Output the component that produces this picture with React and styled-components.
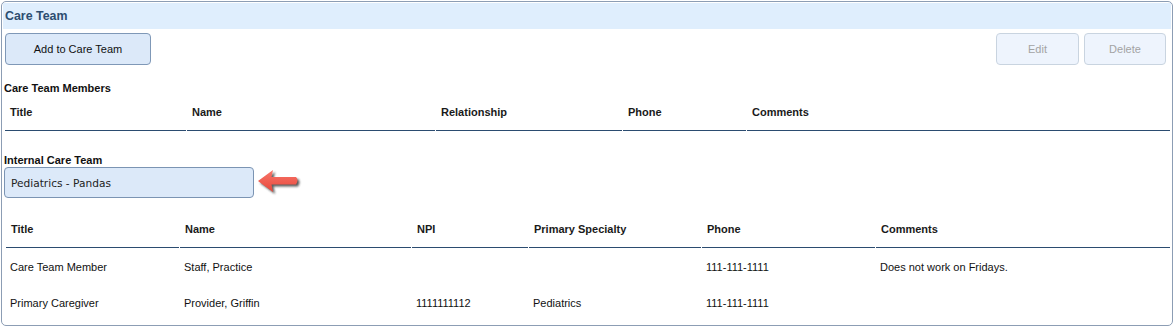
import React from "react";
import styled, { createGlobalStyle } from "styled-components";

const GlobalStyle = createGlobalStyle`
  body {
    margin: 0;
    background: #ffffff;
    font-family: "Liberation Sans", Arial, sans-serif;
    color: #111111;
  }
`;

const members = {
  columns: "181px 248px 186px 123px 1fr",
  heads: ["Title", "Name", "Relationship", "Phone", "Comments"],
  rows: [],
};

const internal = {
  columns: "173px 231px 116px 172px 173px 1fr",
  heads: ["Title", "Name", "NPI", "Primary Specialty", "Phone", "Comments"],
  rows: [
    ["Care Team Member", "Staff, Practice", "", "", "111-111-1111", "Does not work on Fridays."],
    ["Primary Caregiver", "Provider, Griffin", "1111111112", "Pediatrics", "111-111-1111", ""],
  ],
};

const Arrow = () => (
  <ArrowSvg width="50" height="30" viewBox="0 0 50 30">
    <defs>
      <filter id="arrowShadow" x="-20%" y="-30%" width="150%" height="180%">
        <feGaussianBlur stdDeviation="1.2" />
      </filter>
      <linearGradient id="arrowFill" x1="0" y1="0" x2="0" y2="1">
        <stop offset="0" stopColor="#f7766a" />
        <stop offset="1" stopColor="#e8473b" />
      </linearGradient>
    </defs>
    <path
      d="M4 15 L19 4 L17.5 11 L42 11 Q45 14 42 18.5 L17.5 18.5 L19 26 Z"
      fill="#333"
      opacity="0.8"
      filter="url(#arrowShadow)"
    />
    <path
      d="M2 13 L17 2 L15.5 9 L40 9 Q43 12 40 16.5 L15.5 16.5 L17 24 Z"
      fill="url(#arrowFill)"
    />
  </ArrowSvg>
);

const DataTable = ({ table, offset }) => (
  <Grid $columns={table.columns} $offset={offset}>
    {table.heads.map((h) => (
      <HeadCell key={h}>{h}</HeadCell>
    ))}
    {table.rows.map((row, i) =>
      row.map((cell, j) => <BodyCell key={`${i}-${j}`}>{cell}</BodyCell>)
    )}
  </Grid>
);

export default function App() {
  return (
    <>
      <GlobalStyle />
      <Panel>
        <TitleBar>Care Team</TitleBar>
        <Toolbar>
          <Button>Add to Care Team</Button>
          <ButtonGroup>
            <Button $width={83} disabled>
              Edit
            </Button>
            <Button $width={82} disabled>
              Delete
            </Button>
          </ButtonGroup>
        </Toolbar>

        <SectionLabel $top={16}>Care Team Members</SectionLabel>
        <DataTable table={members} offset={2} />

        <SectionLabel $top={23}>Internal Care Team</SectionLabel>
        <SelectRow>
          <TeamSelect>Pediatrics - Pandas</TeamSelect>
          <Arrow />
        </SelectRow>

        <Spacer />
        <DataTable table={internal} offset={3} />
      </Panel>
    </>
  );
}

const Panel = styled.section`
  box-sizing: border-box;
  width: 1172px;
  height: 325px;
  margin: 1px 0 0 1px;
  padding: 1px;
  border: 1px solid #8c9db4;
  border-radius: 5px;
  background: #ffffff;
  overflow: hidden;
`;

const TitleBar = styled.div`
  display: flex;
  align-items: center;
  height: 26px;
  padding-left: 2px;
  background: #dfeefd;
  color: #2d4d70;
  font-size: 12.4px;
  font-weight: 700;
`;

const Toolbar = styled.div`
  display: flex;
  justify-content: space-between;
  margin-top: 4px;
  padding: 0 5px 0 2px;
`;

const ButtonGroup = styled.div`
  display: flex;
  gap: 5px;
`;

const Button = styled.button`
  box-sizing: border-box;
  width: ${(p) => p.$width || 146}px;
  height: 32px;
  padding: 0;
  border: 1px solid #7f98b7;
  border-radius: 4px;
  background: #dce9f9;
  color: #111111;
  font-family: "Liberation Sans", Arial, sans-serif;
  font-size: 11px;

  &:disabled {
    border-color: #c9d4e0;
    background: #eef4fd;
    color: #a3a3a3;
  }
`;

const SectionLabel = styled.div`
  margin-top: ${(p) => p.$top}px;
  padding-left: 1px;
  font-size: 11px;
  font-weight: 700;
  line-height: ${(p) => (p.$top > 20 ? 13 : 14)}px;
`;

const Grid = styled.div`
  display: grid;
  grid-template-columns: ${(p) => p.$columns};
  column-gap: 1px;
  margin-left: ${(p) => p.$offset}px;
  width: ${(p) => 1167 - p.$offset}px;
`;

const HeadCell = styled.div`
  box-sizing: border-box;
  height: 36px;
  padding: 10px 0 0 5px;
  border-bottom: 1px solid #2b4c70;
  font-size: 11px;
  font-weight: 700;
  line-height: 14px;
  color: #1a1a1a;
`;

const BodyCell = styled.div`
  box-sizing: border-box;
  height: 36px;
  padding: 12px 0 0 4px;
  font-size: 11px;
  line-height: 14px;
  white-space: nowrap;
`;

const SelectRow = styled.div`
  display: flex;
  align-items: flex-start;
  padding-left: 1px;
`;

const TeamSelect = styled.div`
  box-sizing: border-box;
  display: flex;
  align-items: center;
  width: 250px;
  height: 31px;
  padding-left: 6px;
  border: 1px solid #7b94b3;
  border-radius: 4px;
  background: #dce9f9;
  font-family: "DejaVu Sans", Verdana, sans-serif;
  font-size: 10.6px;
  color: #222222;
`;

const ArrowSvg = styled.svg`
  display: block;
  margin: 1px 0 0 2px;
`;

const Spacer = styled.div`
  height: 14px;
`;
